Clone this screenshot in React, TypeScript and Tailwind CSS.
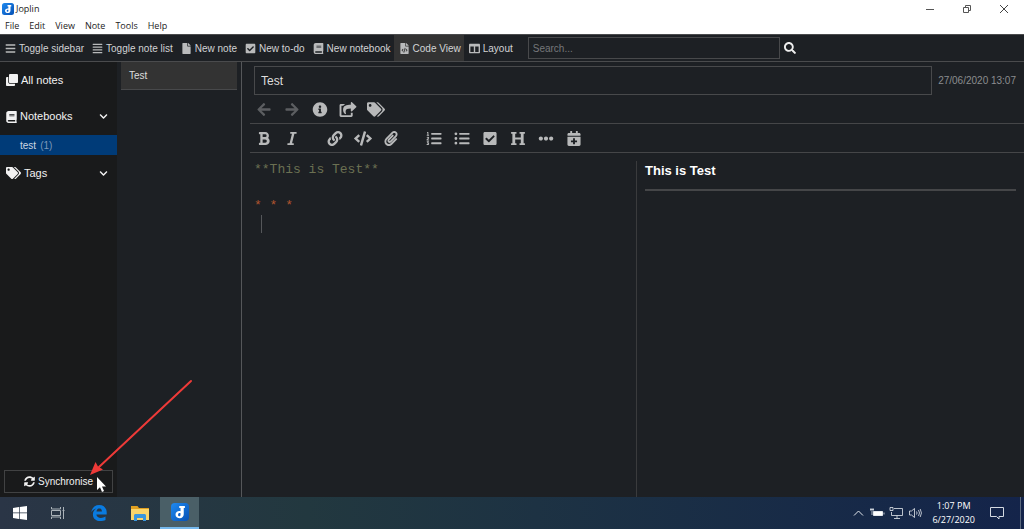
import { useState } from 'react';
import type { IconType } from 'react-icons';
import {
  FaAlignJustify,
  FaArrowLeft,
  FaArrowRight,
  FaBars,
  FaBold,
  FaBook,
  FaCalendarPlus,
  FaCheckSquare,
  FaChevronDown,
  FaClone,
  FaCode,
  FaColumns,
  FaEllipsisH,
  FaFile,
  FaFileCode,
  FaHeading,
  FaInfoCircle,
  FaItalic,
  FaLink,
  FaListOl,
  FaListUl,
  FaPaperclip,
  FaSearch,
  FaShareSquare,
  FaSyncAlt,
  FaTags,
} from 'react-icons/fa';

interface Action {
  label: string;
  icon: IconType;
  active?: boolean;
  muted?: boolean;
}

const menus = ['File', 'Edit', 'View', 'Note', 'Tools', 'Help'];

const toolbar: Action[] = [
  { label: 'Toggle sidebar', icon: FaBars },
  { label: 'Toggle note list', icon: FaAlignJustify },
  { label: 'New note', icon: FaFile },
  { label: 'New to-do', icon: FaCheckSquare },
  { label: 'New notebook', icon: FaBook },
  { label: 'Code View', icon: FaFileCode, active: true },
  { label: 'Layout', icon: FaColumns },
];

const noteActions: Action[] = [
  { label: 'Back', icon: FaArrowLeft, muted: true },
  { label: 'Forward', icon: FaArrowRight, muted: true },
  { label: 'Note properties', icon: FaInfoCircle },
  { label: 'Share', icon: FaShareSquare },
  { label: 'Tags', icon: FaTags },
];

const formatGroups: Action[][] = [
  [
    { label: 'Bold', icon: FaBold },
    { label: 'Italic', icon: FaItalic },
  ],
  [
    { label: 'Hyperlink', icon: FaLink },
    { label: 'Code', icon: FaCode },
    { label: 'Attach file', icon: FaPaperclip },
  ],
  [
    { label: 'Numbered list', icon: FaListOl },
    { label: 'Bulleted list', icon: FaListUl },
    { label: 'Checkbox', icon: FaCheckSquare },
    { label: 'Heading', icon: FaHeading },
    { label: 'Horizontal rule', icon: FaEllipsisH },
    { label: 'Insert date', icon: FaCalendarPlus },
  ],
];

function JoplinLogo({ className }: { className: string }) {
  return (
    <svg viewBox="0 0 24 24" className={className} aria-hidden="true">
      <defs>
        <linearGradient id="joplin" x1="0" y1="0" x2="1" y2="1">
          <stop offset="0" stopColor="#1f8af0" />
          <stop offset="1" stopColor="#0650b4" />
        </linearGradient>
      </defs>
      <rect width="24" height="24" rx="5" fill="url(#joplin)" />
      <path
        d="M11 4h7.500v2.800H17v8.200c0 3.200-2.200 5.200-5.300 5.200-3 0-5.700-1.800-5.700-4.700 0-2.900 2.500-4.700 5-4.700.7 0 1.300.1 1.700.3V6.800H11z"
        fill="#fff"
      />
      <path d="M12.700 13.600c-1.800-.7-3.300.3-3.300 1.900 0 1.300.9 2.100 2 2.100.9 0 1.300-.6 1.300-1.500z" fill="#0c62cc" />
    </svg>
  );
}

function TitleBar() {
  return (
    <header className="bg-white font-['Open_Sans',sans-serif] text-[#222]">
      <div className="flex h-[18px] items-center pl-[2px]">
        <JoplinLogo className="size-3" />
        <span className="ml-[2px] text-[9px]">Joplin</span>
        <div className="ml-auto flex items-center pr-[2px]">
          <button aria-label="Minimize" className="flex w-[37px] justify-center">
            <svg viewBox="0 0 10 10" className="size-[10px]" fill="none" stroke="#555">
              <path d="M1 5.500h8" />
            </svg>
          </button>
          <button aria-label="Restore" className="flex w-[37px] justify-center">
            <svg viewBox="0 0 10 10" className="size-[10px]" fill="none" stroke="#555">
              <path d="M1.500 3.500h5v5h-5zM3.500 3V1.500h5v5H7" />
            </svg>
          </button>
          <button aria-label="Close" className="flex w-[37px] justify-center">
            <svg viewBox="0 0 10 10" className="size-[10px]" fill="none" stroke="#444">
              <path d="M1 1l8 8M9 1l-8 8" />
            </svg>
          </button>
        </div>
      </div>
      <nav className="flex h-4 items-center gap-[10px] pl-[5px] text-[9px]">
        {menus.map((menu) => (
          <button key={menu}>{menu}</button>
        ))}
      </nav>
    </header>
  );
}

function MainToolbar() {
  return (
    <div className="flex h-7 items-center border-t border-b border-[#4a4b4d] bg-[#1d2024] text-[10px] text-[#d2d3d4]">
      {toolbar.map(({ label, icon: Icon, active }) => (
        <button
          key={label}
          className={`flex h-full items-center gap-[3px] pr-[3px] pl-[5px] whitespace-nowrap ${active ? 'bg-[#333]' : ''}`}
        >
          <Icon className="size-[11px] text-[#b9babb]" />
          {label}
        </button>
      ))}
      <input
        type="search"
        aria-label="Search"
        placeholder="Search..."
        className="ml-3 h-[22px] w-[252px] border border-[#48494b] bg-transparent px-1 placeholder:text-[#75777a]"
      />
      <button aria-label="Run search" className="ml-1">
        <FaSearch className="size-3 text-[#eee]" />
      </button>
    </div>
  );
}

function Sidebar() {
  return (
    <aside className="flex w-[117px] shrink-0 flex-col bg-[#191a1b] text-[11px] text-[#f2f2f2]">
      <button className="flex h-9 items-center gap-[3px] pl-[6px]">
        <FaClone className="size-3" />
        All notes
      </button>
      <button className="flex h-[37px] items-center gap-[3px] pr-[9px] pl-[6px]">
        <FaBook className="h-3 w-[11px]" />
        Notebooks
        <FaChevronDown className="ml-auto size-[9px]" />
      </button>
      <button className="flex h-5 items-center gap-1 bg-[#003b78] pl-5 text-[10px] text-[#ccd6e2]">
        test <span className="text-[#7d98b8]">(1)</span>
      </button>
      <button className="flex h-9 items-center gap-[3px] pr-[9px] pl-[6px]">
        <FaTags className="h-3 w-[15px]" />
        Tags
        <FaChevronDown className="ml-auto size-[9px]" />
      </button>
      <button className="mx-1 mt-auto mb-1 flex h-[23px] items-center justify-center gap-[3px] border border-[#414243] text-[10px]">
        <FaSyncAlt className="size-[11px]" />
        Synchronise
      </button>
    </aside>
  );
}

function IconButton({ label, icon: Icon, muted }: Action) {
  return (
    <button aria-label={label} className={`flex w-7 justify-center ${muted ? 'text-[#5c5e61]' : 'text-[#b8b9ba]'}`}>
      <Icon className="h-[15px] w-[18px]" />
    </button>
  );
}

function NoteEditor() {
  const [title, setTitle] = useState('Test');

  return (
    <main className="flex min-w-0 grow flex-col pl-2">
      <div className="mt-1 flex items-center gap-[6px] pr-2 pl-1">
        <input
          aria-label="Note title"
          value={title}
          onChange={(e) => setTitle(e.target.value)}
          className="h-[29px] min-w-0 grow border border-[#48494b] bg-transparent px-[6px] text-xs text-[#ddd]"
        />
        <time className="text-[10px] whitespace-nowrap text-[#8b8d8f]">27/06/2020 13:07</time>
      </div>
      <div className="flex h-7 items-center">
        {noteActions.map((action) => (
          <IconButton key={action.label} {...action} />
        ))}
      </div>
      <div className="flex h-[30px] items-center gap-[15px] border-y border-[#454648]">
        {formatGroups.map((group) => (
          <div key={group[0].label} className="flex">
            {group.map((action) => (
              <IconButton key={action.label} {...action} />
            ))}
          </div>
        ))}
      </div>
      <div className="mt-2 flex grow">
        <div
          role="textbox"
          aria-label="Note body"
          aria-multiline="true"
          tabIndex={0}
          className="w-1/2 border-r border-[#3a3b3d] pl-1 font-['Liberation_Mono',monospace] text-[13px] leading-[18px] whitespace-pre text-[#6b7052]"
        >
          <div>**This is Test**</div>
          <div className="mt-[18px] text-[#b0542f]">* * *</div>
          <div className="ml-[7px] h-[18px] border-l border-[#55575a]" />
        </div>
        <article className="w-1/2 px-2">
          <h1 className="border-b-2 border-[#454648] pt-px pb-[9px] text-[13px] leading-[18px] font-bold text-white">
            This is Test
          </h1>
        </article>
      </div>
    </main>
  );
}

function Taskbar() {
  return (
    <footer className="flex h-8 items-stretch bg-linear-to-r from-[#2a3546] via-[#22383f] via-30% to-[#14244a] text-white">
      <button aria-label="Start" className="flex w-[39px] items-center justify-center">
        <svg viewBox="0 0 14 14" className="size-[14px]" fill="#fff">
          <path d="M0 2l6-.9v5.500H0zM6.700 1L14 0v6.600H6.700zM0 7.300h6v5.600L0 12zM6.700 7.300H14V14l-7.300-1z" />
        </svg>
      </button>
      <button aria-label="Task view" className="flex w-[38px] items-center justify-center">
        <svg viewBox="0 0 14 14" className="size-[14px]" fill="none" stroke="#aab2b8">
          <path d="M.5 1v2h9V1M.5 13v-2h9v2M.5 4.500h9v5h-9zM12.500 1v12M11.500 4.500h2" />
        </svg>
      </button>
      <button aria-label="Edge" className="flex w-[43px] items-center justify-center">
        <svg viewBox="0 0 16 16" className="size-4" fill="#0a7be0">
          <path d="M.3 7.200C.8 3 4 0 8.200 0c4.500 0 7.500 3.100 7.500 7.500v2H5.400c.1 2.300 2.200 3.400 4.500 3.400 1.700 0 3.300-.5 4.600-1.300v3.300c-1.500.8-3.300 1.100-5.200 1.100-4.300 0-7.400-2.500-7.400-6.600 0-2.600 1.300-4.700 3.600-5.900-2.300.5-4 1.700-5.200 3.700zM5.500 6.400h5.400c0-1.700-.9-2.800-2.600-2.800-1.500 0-2.600 1.100-2.800 2.800z" />
        </svg>
      </button>
      <button aria-label="File explorer" className="flex w-10 items-center justify-center">
        <svg viewBox="0 0 18 15" className="h-[15px] w-[18px]">
          <path d="M0 0h6.500l1.500 2h10v12H0z" fill="#e0a020" />
          <path d="M0 3h18v11H0z" fill="#fbd56a" />
          <path d="M3 15V9.500C3 8.700 3.700 8 4.500 8h9c.8 0 1.500.7 1.500 1.500V15h-3v-3H6v3z" fill="#3a96dd" />
        </svg>
      </button>
      <button aria-label="Joplin" className="flex w-[39px] items-center justify-center border-b-2 border-[#76b9ed] bg-[#4a5f67]">
        <JoplinLogo className="size-[18px]" />
      </button>
      <div className="ml-auto flex items-center font-['Open_Sans',sans-serif] text-[9px]">
        <svg viewBox="0 0 70 14" className="h-[14px] w-[70px]" fill="none" stroke="#e4e8ee">
          <path d="M1 9.500l4.500-4.500L10 9.500" />
          <path d="M20.500 5.500h9v4h-9z" fill="#fff" />
          <path d="M31 6.500v2M17 3.500h4M18 2v3M20 2v3M19 5v4" strokeWidth=".8" />
          <path d="M41 2.500h8.500v7h-11V6M37 1.500h3v3h-3zM44 9.500v3M41 12.500h6" strokeWidth=".8" />
          <path d="M56.500 5h2l3-2.500v9L58.500 9h-2z" strokeWidth=".8" />
          <path d="M63.500 5.500q1.200 1.500 0 3M65.500 4q2 3 0 6M67.200 3q2.500 4 0 8" strokeWidth=".8" />
        </svg>
        <time className="ml-[9px] text-center leading-[14px] whitespace-nowrap">
          1:07 PM
          <br />
          6/27/2020
        </time>
        <button aria-label="Notifications" className="ml-[15px]">
          <svg viewBox="0 0 14 14" className="size-[14px]" fill="none" stroke="#d4dae2">
            <path d="M.5 1.500h13v9H9V13l-2.500-2.500h-6z" />
          </svg>
        </button>
        <div className="mr-[3px] ml-4 h-8 border-l border-[#5c6a80]" />
      </div>
    </footer>
  );
}

export default function App() {
  return (
    <div className="relative flex min-h-screen flex-col overflow-hidden bg-[#1d2024] font-['Liberation_Sans',Arial,sans-serif]">
      <TitleBar />
      <MainToolbar />
      <div className="flex grow">
        <Sidebar />
        <section className="w-[125px] shrink-0 border-r border-[#55575a] pr-1 pl-1">
          <button className="block h-7 w-full border-b border-[#48494b] bg-[#333] pl-2 text-left text-[10px] text-[#ddd]">
            Test
          </button>
        </section>
        <NoteEditor />
      </div>
      <Taskbar />

      {/* arrow and mouse pointer over the sync button */}
      <svg viewBox="0 0 110 116" className="pointer-events-none absolute bottom-9 left-[85px] h-[116px] w-[110px]">
        <path d="M106 4L14 90" stroke="#ee3a38" strokeWidth="2" fill="none" strokeLinecap="round" />
        <path d="M5 98l5.500-13 2.500 4.500 5 3z" fill="#ee3a38" />
        <path d="M12 100v13l3-2.700 2 4.700 2-.9-2-4.500h4z" fill="#fff" />
      </svg>
    </div>
  );
}
